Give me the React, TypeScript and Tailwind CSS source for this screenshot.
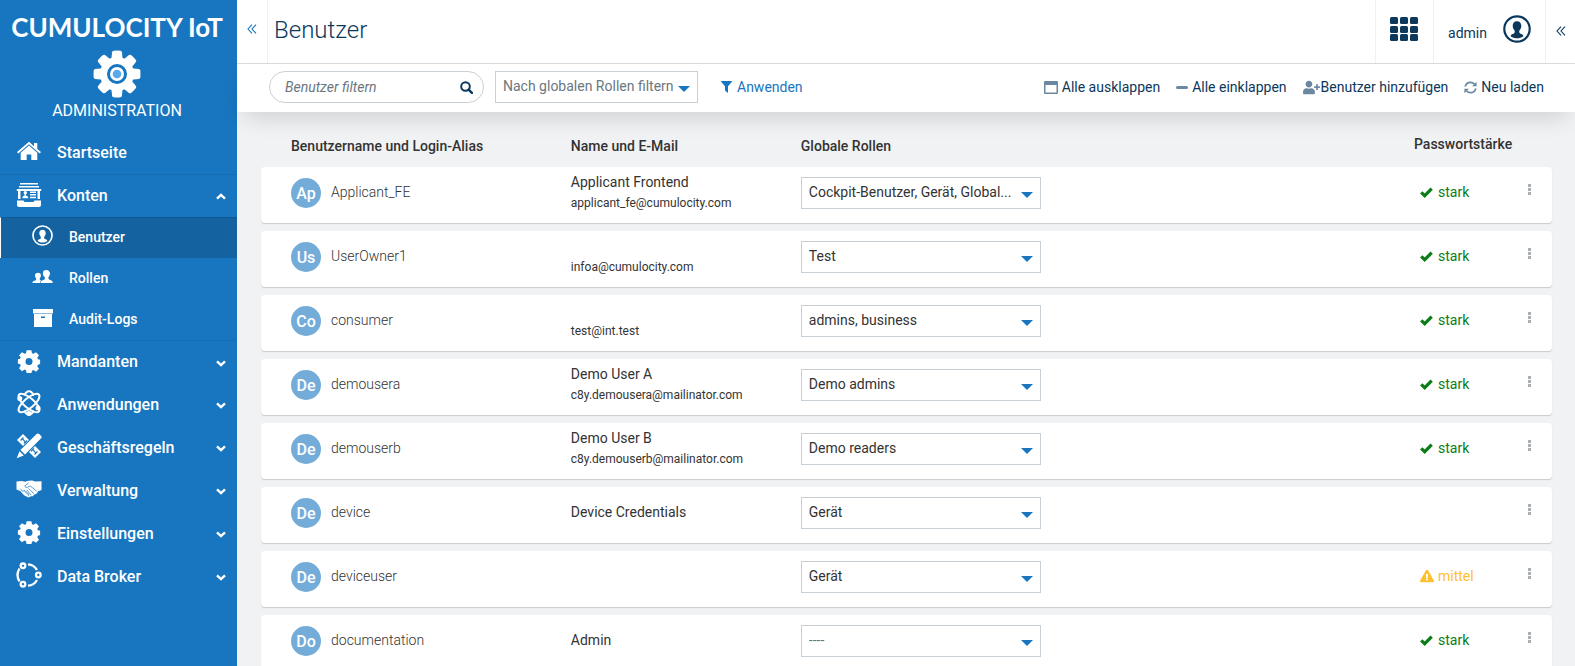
import React from 'react';
import { FaExclamationTriangle, FaUserPlus } from 'react-icons/fa';

type IconProps = { className?: string };

function GearIcon({ className }: IconProps) {
  return (
    <svg viewBox="0 0 24 24" fill="currentColor" className={className} aria-hidden="true">
      <path
        fillRule="evenodd"
        d="M9.600 1.300h4.800l.6 2.900 1.500.6 2.500-1.600 3 3.100-1.700 2.500.6 1.500 2.200.5v4.300l-2.200.6-.6 1.500 1.700 2.500-3 3-2.500-1.600-1.500.6-.6 2.500H9.600L9 21.200l-1.500-.6L5 22.200l-3-3 1.700-2.500-.6-1.500-2.200-.6v-4.300l2.200-.5.6-1.500L2 6.300l3-3.100 2.500 1.600L9 4.200zM12 8.900a3.500 3.500 0 1 0 0 7 3.500 3.500 0 0 0 0-7z"
      />
    </svg>
  );
}

function AppGearIcon({ className }: IconProps) {
  return (
    <svg viewBox="0 0 48 48" className={className} aria-hidden="true">
      <g fill="#fff">
        <circle cx="24" cy="24" r="17" />
        {[0, 45, 90, 135, 180, 225, 270, 315].map((a) => (
          <path key={a} d="M18.300 10l.8-7.800q.2-1.200 1.400-1.500q3.500-.4 7 0q1.200.3 1.400 1.500l.8 7.800z" transform={`rotate(${a} 24 24)`} />
        ))}
      </g>
      <circle cx="24" cy="24" r="10" fill="#1776bf" />
      <circle cx="24" cy="24" r="7" fill="#fff" />
      <circle cx="24" cy="24" r="4.300" fill="#5aa9ea" />
    </svg>
  );
}

function HomeIcon({ className }: IconProps) {
  return (
    <svg viewBox="0 0 24 20" fill="currentColor" className={className} aria-hidden="true">
      <path d="M12 .8L17 5.200V2h3.300v6L24 11l-1.300 1.500L12 3.300 1.300 12.500 0 11z" />
      <path d="M12 4.600l8.300 7.200V19h-6v-5.500H9.700V19h-6v-7.200z" />
    </svg>
  );
}

function HandshakeIcon({ className }: IconProps) {
  return (
    <svg viewBox="0 0 26 18" className={className} aria-hidden="true">
      <path
        fill="currentColor"
        d="M.5 1.500L6 1l3 .8L12.500.7 16 .5l3.500 1 6-.2V10l-3.300 1.200-1.700 2.600-2 .8-1.800 1.600-2 .1-1.700 1.200-2-.7-2.600-1.400-2-2L4.200 11 .5 9.500z"
      />
      <path
        fill="none"
        stroke="#1776bf"
        strokeWidth=".7"
        strokeLinejoin="round"
        d="M12.800 2.700L8.600 6.200q1 2 3.200.9l2.300-1.300 6.700 5.500M12.500 8.600l5.500 5M10.800 9.800l4.500 5.400M4.500 8.800l2.200 2.700 1.800-1.300.7 2 1.700-.3.200 2.200 1.700-.2-.2 2"
      />
    </svg>
  );
}

function CheckIcon({ className }: IconProps) {
  return (
    <svg viewBox="0 0 13 11" fill="none" stroke="currentColor" strokeWidth="3.200" className={className} aria-hidden="true">
      <path d="M1.200 5.300l3.500 3.400L11.700 1.700" />
    </svg>
  );
}

function SearchIcon({ className }: IconProps) {
  return (
    <svg viewBox="0 0 13 13" fill="none" stroke="currentColor" strokeWidth="2" className={className} aria-hidden="true">
      <circle cx="5.500" cy="5.500" r="4.300" />
      <path d="M8.600 8.600l3.300 3.300" strokeWidth="2.400" strokeLinecap="round" />
    </svg>
  );
}

function FilterIcon({ className }: IconProps) {
  return (
    <svg viewBox="0 0 11 12" fill="currentColor" className={className} aria-hidden="true">
      <path d="M.4 0h10.200q.6.500.1 1.100L7 5.200V12L4 9.500V5.200L.3 1.100Q-.2.500.4 0z" />
    </svg>
  );
}

function AccountsIcon({ className }: IconProps) {
  return (
    <svg viewBox="0 0 26 26" fill="currentColor" className={className} aria-hidden="true">
      <path d="M4 1h18v1.600H4zM3 4h20v1.600H3z" />
      <path
        fillRule="evenodd"
        d="M.8 7h24.400v2H24v8H2V9H.8zM4.500 9v8h17V9zM1 18.500h6.500l1 1.500h9l1-1.500H25V23q0 2-2 2H3q-2 0-2-2z"
      />
      <circle cx="9.300" cy="10.800" r="1.700" />
      <path d="M6.300 16.300q0-2.500 2.300-2.700v-2h1.400v2q2.300.2 2.300 2.700zM14 9.500h6v1.500h-6zM14 12.100h6v1.500h-6zM14 14.700h6v1.500h-6z" />
    </svg>
  );
}

function UserCircleIcon({ className }: IconProps) {
  return (
    <svg viewBox="0 0 28 28" className={className} aria-hidden="true">
      <circle cx="14" cy="14" r="12.700" fill="none" stroke="currentColor" strokeWidth="2.200" />
      <path
        fill="currentColor"
        d="M14 6.200c2.700 0 4.300 1.800 4.300 4.600 0 2-.8 3.500-1.900 4.700-.5 2 .1 3.100 1.700 3.500 1.400.3 2 1 2.300 2.300-2 1.400-4 2-6.400 2s-4.400-.6-6.400-2c.3-1.300.9-2 2.300-2.300 1.600-.4 2.200-1.500 1.700-3.500-1.100-1.200-1.900-2.700-1.900-4.700 0-2.800 1.600-4.600 4.300-4.600z"
      />
    </svg>
  );
}

function GroupIcon({ className }: IconProps) {
  return (
    <svg viewBox="0 0 22 14" fill="currentColor" className={className} aria-hidden="true">
      <path d="M15 0c2.500 0 4 1.500 3.800 3.900-.1 1.600-.8 2.700-1.500 3.600-.4 1.700.2 2.600 1.900 3.100 1.700.5 2.400 1.200 2.600 3.100H9c.1-1.900.9-2.600 2.700-3.100 1.600-.5 2.100-1.400 1.600-3.100-.9-.9-1.800-2-1.900-3.600C11.200 1.500 12.500 0 15 0z" />
      <path d="M6.300 3c2.100 0 3.200 1.200 3 3.100-.1 1.200-.6 2-1.200 2.700-.3 1.200.2 1.800 1.500 2.200-.8.700-1.200 1.500-1.200 2.700H.4c.1-1.500.7-2.100 2.200-2.500 1.500-.4 2-1.100 1.700-2.400-.6-.7-1.100-1.500-1.200-2.700C2.900 4.200 4.200 3 6.300 3z" />
    </svg>
  );
}

function ArchiveIcon({ className }: IconProps) {
  return (
    <svg viewBox="0 0 20 18" fill="currentColor" className={className} aria-hidden="true">
      <path fillRule="evenodd" d="M0 0h20v4.500H0zM1 5h18v13H1zM8 7.500v1.500h4V7.500z" />
    </svg>
  );
}

function AtomIcon({ className }: IconProps) {
  return (
    <svg viewBox="0 0 26 26" fill="none" stroke="currentColor" strokeWidth="2" className={className} aria-hidden="true">
      <ellipse cx="13" cy="13" rx="5" ry="13" transform="rotate(50 13 13)" />
      <ellipse cx="13" cy="13" rx="5" ry="13" transform="rotate(-50 13 13)" />
      <path d="M8.300 5.500C9.500 2.700 11 1.300 13 1.300s3.500 1.400 4.700 4.200M8.300 20.500c1.200 2.800 2.700 4.200 4.700 4.200s3.500-1.400 4.700-4.200" />
      <g fill="currentColor" stroke="none">
        <circle cx="3.800" cy="8.500" r="2.500" />
        <circle cx="22" cy="18" r="2.500" />
        <circle cx="13" cy="23.500" r="2.400" />
      </g>
    </svg>
  );
}

function RulesIcon({ className }: IconProps) {
  return (
    <svg viewBox="0 0 26 26" className={className} aria-hidden="true">
      <path d="M4 4l18 18" stroke="currentColor" strokeWidth="8.500" />
      <path d="M4.500 7.500l3-3M8 10.500l3-3M6.500 5.800L9 8.600M15 18.300l3-3M18.500 21.500l3-3M16.800 16.700l2.700 2.900" stroke="#1776bf" strokeWidth="1.200" />
      <path d="M5 21L22 4" stroke="#1776bf" strokeWidth="8.600" />
      <path fill="currentColor" d="M20.600 1.100Q22 0 23.200 1.100l1.900 1.900q1 1.100 0 2.300L9 21.600 4.400 17zM3.500 18.200l4.300 4.200L.7 25.300z" />
    </svg>
  );
}

function BrokerIcon({ className }: IconProps) {
  return (
    <svg viewBox="0 0 26 26" fill="none" stroke="currentColor" strokeWidth="2.300" className={className} aria-hidden="true">
      <circle cx="7" cy="3.800" r="2.300" />
      <circle cx="22.300" cy="13" r="2.300" />
      <circle cx="7" cy="22.200" r="2.300" />
      <path d="M3.500 6.500Q-.5 13 3.500 19.500M12 2.300q6 .2 9 5.700M12 23.700q6-.2 9-5.700" />
    </svg>
  );
}

function ChevronIcon({ className }: IconProps) {
  return (
    <svg viewBox="0 0 10 7" fill="none" stroke="currentColor" strokeWidth="2.400" className={className} aria-hidden="true">
      <path d="M1 1.300l4 3.800 4-3.800" />
    </svg>
  );
}

function DoubleLeftIcon({ className }: IconProps) {
  return (
    <svg viewBox="0 0 10 10" fill="none" stroke="currentColor" strokeWidth="1.100" className={className} aria-hidden="true">
      <path d="M5 .7L1 5l4 4.300M9 .7L5 5l4 4.300" />
    </svg>
  );
}

function WindowIcon({ className }: IconProps) {
  return (
    <svg viewBox="0 0 14 13" className={className} aria-hidden="true">
      <path fill="currentColor" fillRule="evenodd" d="M1 0h12q1 0 1 1v11q0 1-1 1H1q-1 0-1-1V1q0-1 1-1zM1.500 4v7.500h11V4z" />
    </svg>
  );
}

function RefreshIcon({ className }: IconProps) {
  return (
    <svg viewBox="0 0 13 13" className={className} aria-hidden="true">
      <path fill="none" stroke="currentColor" strokeWidth="1.700" d="M1.200 5.600C1.800 3 3.800 1.300 6.500 1.300c1.700 0 3 .7 4.100 1.900M11.800 7.400c-.6 2.600-2.600 4.300-5.300 4.300-1.700 0-3-.7-4.100-1.900" />
      <path fill="currentColor" d="M12.600.8v4.500H8.100zM.4 12.200V7.700h4.500z" />
    </svg>
  );
}

function GridIcon({ className }: IconProps) {
  return (
    <svg viewBox="0 0 28 24" fill="currentColor" className={className} aria-hidden="true">
      {[0, 10, 20].map((x) => [0, 9, 17].map((y) => <rect key={`${x}-${y}`} x={x} y={y} width="8" height="7" rx="1.500" />))}
    </svg>
  );
}

function DotsIcon({ className }: IconProps) {
  return (
    <svg viewBox="0 0 3 11" fill="currentColor" className={className} aria-hidden="true">
      <path d="M0 0h3v3H0zM0 4h3v3H0zM0 8h3v3H0z" />
    </svg>
  );
}

function RootItem({ icon, label, expanded, divided }: { icon: React.ReactNode; label: string; expanded?: boolean; divided?: boolean }) {
  return (
    <a
      href="#"
      className={
        divided
          ? 'flex h-[43px] items-center border-t border-[#166db1] pl-4 pr-[11px] text-base font-medium'
          : 'flex h-[43px] items-center pl-4 pr-[11px] text-base font-medium'
      }
    >
      <span className="mr-[15px] flex w-[26px] justify-center pb-[3px]">{icon}</span>
      <span className="flex-1">{label}</span>
      {expanded !== undefined && <ChevronIcon className={expanded ? 'w-[10px] rotate-180' : 'mt-[2px] w-[10px]'} />}
    </a>
  );
}

function SubItem({ icon, label, active }: { icon: React.ReactNode; label: string; active?: boolean }) {
  return (
    <a
      href="#"
      className={
        active
          ? 'flex h-[41px] items-center border-l border-l-white border-t border-t-[#135a93] bg-[#1562a0] pb-[2px] pl-[31px] text-sm font-medium'
          : 'flex h-[41px] items-center pb-px pl-8 text-sm font-medium'
      }
    >
      <span className="mr-4 flex w-[21px] justify-center pb-[3px]">{icon}</span>
      {label}
    </a>
  );
}

function Sidebar() {
  return (
    <nav className="w-[237px] shrink-0 bg-[#1776bf] text-white">
      <div className="flex flex-col items-center pr-[3px] pt-[9px]">
        <div className="whitespace-nowrap font-[Lato] text-[26px] font-bold leading-9">CUMULOCITY IoT</div>
        <AppGearIcon className="mt-[5px] size-12" />
        <div className="mt-[3px] text-base leading-5">ADMINISTRATION</div>
      </div>
      <div className="mt-[10px]">
        <RootItem icon={<HomeIcon className="w-6" />} label="Startseite" />
        <RootItem icon={<AccountsIcon className="size-[26px]" />} label="Konten" expanded divided />
        <SubItem icon={<UserCircleIcon className="size-[21px]" />} label="Benutzer" active />
        <SubItem icon={<GroupIcon className="w-[21px]" />} label="Rollen" />
        <SubItem icon={<ArchiveIcon className="w-5" />} label="Audit-Logs" />
        <RootItem icon={<GearIcon className="size-6" />} label="Mandanten" expanded={false} divided />
        <RootItem icon={<AtomIcon className="size-[26px]" />} label="Anwendungen" expanded={false} />
        <RootItem icon={<RulesIcon className="size-[26px]" />} label="Geschäftsregeln" expanded={false} />
        <RootItem icon={<HandshakeIcon className="w-[26px]" />} label="Verwaltung" expanded={false} />
        <RootItem icon={<GearIcon className="size-6" />} label="Einstellungen" expanded={false} />
        <RootItem icon={<BrokerIcon className="size-[26px]" />} label="Data Broker" expanded={false} />
      </div>
    </nav>
  );
}

function Header() {
  return (
    <header className="flex h-16 shrink-0 border-b border-[#d9dcdf] bg-white text-[#0b385b]">
      <button aria-label="Navigation einklappen" className="flex w-[31px] items-center justify-center border-r border-[#eff0f2] pb-[5px] text-[#1776bf]">
        <DoubleLeftIcon className="size-[10px]" />
      </button>
      <h1 className="flex-1 pl-[6px] pt-3 text-2xl font-light leading-9">Benutzer</h1>
      <button aria-label="Anwendungen" className="flex w-[58px] items-center justify-center border-l border-[#eff0f2] pb-[6px] pr-[2px]">
        <GridIcon className="w-7" />
      </button>
      <button className="flex items-center gap-4 border-x border-[#eff0f2] px-[14px] text-sm">
        <span className="pt-[2px]">admin</span>
        <UserCircleIcon className="mb-[6px] size-7" />
      </button>
      <button aria-label="Seitenleiste ausklappen" className="flex w-[29px] items-center justify-center pb-[2px]">
        <DoubleLeftIcon className="size-[10px]" />
      </button>
    </header>
  );
}

function SelectArrow({ className }: IconProps) {
  return (
    <span className={className}>
      <svg viewBox="0 0 12 6" className="w-3 text-[#1776bf]" aria-hidden="true">
        <path fill="currentColor" d="M0 0h12L6 6z" />
      </svg>
    </span>
  );
}

function Toolbar() {
  return (
    <div className="relative z-10 flex h-12 shrink-0 items-center bg-white pb-[2px] pl-8 pr-[31px] text-sm text-[#0b385b] shadow-[0_12px_24px_-8px_rgba(0,0,0,0.16)]">
      <label className="flex h-8 w-[215px] items-center rounded-full border border-[#c9d0d5] pl-[15px] pr-[10px]">
        <input
          type="text"
          aria-label="Benutzer filtern"
          placeholder="Benutzer filtern"
          className="min-w-0 flex-1 bg-transparent italic outline-none placeholder:text-[#6b7780]"
        />
        <SearchIcon className="size-[13px]" />
      </label>
      <div className="relative ml-[11px]">
        <select
          aria-label="Nach globalen Rollen filtern"
          className="h-8 w-[203px] appearance-none border border-[#c9d0d5] bg-white pb-[2px] pl-[7px] text-[#6b7780]"
        >
          <option>Nach globalen Rollen filtern</option>
        </select>
        <SelectArrow className="pointer-events-none absolute right-2 top-[15px]" />
      </div>
      <button className="ml-[23px] flex items-center gap-[5px] pb-px text-[#1776bf]">
        <FilterIcon className="w-[11px]" />
        Anwenden
      </button>
      <div className="ml-auto flex items-center gap-4">
        <button className="flex items-center gap-1">
          <WindowIcon className="w-[14px] text-[#6c88a0]" />
          Alle ausklappen
        </button>
        <button className="flex items-center gap-1">
          <span className="h-[3px] w-3 rounded-xs bg-[#6c88a0]" />
          Alle einklappen
        </button>
        <button className="flex items-center gap-px">
          <FaUserPlus className="size-[17px] text-[#6c88a0]" />
          Benutzer hinzufügen
        </button>
        <button className="flex items-center gap-1">
          <RefreshIcon className="size-[13px] text-[#6c88a0]" />
          Neu laden
        </button>
      </div>
    </div>
  );
}

type User = { login: string; name: string; email: string; roles: string; strength?: 'stark' | 'mittel' };

const NO_ROLES = '----';

const USERS: User[] = [
  { login: 'Applicant_FE', name: 'Applicant Frontend', email: 'applicant_fe@cumulocity.com', roles: 'Cockpit-Benutzer, Gerät, Global...', strength: 'stark' },
  { login: 'UserOwner1', name: '', email: 'infoa@cumulocity.com', roles: 'Test', strength: 'stark' },
  { login: 'consumer', name: '', email: 'test@int.test', roles: 'admins, business', strength: 'stark' },
  { login: 'demousera', name: 'Demo User A', email: 'c8y.demousera@mailinator.com', roles: 'Demo admins', strength: 'stark' },
  { login: 'demouserb', name: 'Demo User B', email: 'c8y.demouserb@mailinator.com', roles: 'Demo readers', strength: 'stark' },
  { login: 'device', name: 'Device Credentials', email: '', roles: 'Gerät' },
  { login: 'deviceuser', name: '', email: '', roles: 'Gerät', strength: 'mittel' },
  { login: 'documentation', name: 'Admin', email: '', roles: NO_ROLES, strength: 'stark' },
];

function Strength({ value }: { value: 'stark' | 'mittel' }) {
  return value === 'stark' ? (
    <span className="flex items-center gap-[5px] text-[#0a7d14]">
      <CheckIcon className="w-[13px]" />
      stark
    </span>
  ) : (
    <span className="flex items-center gap-1 text-[#ffc02e]">
      <FaExclamationTriangle className="size-[14px]" />
      mittel
    </span>
  );
}

function UserRow({ user }: { user: User }) {
  const stacked = user.email !== '';
  return (
    <tr className="h-14 rounded-sm bg-white shadow-[0_1px_1px_rgba(0,0,0,0.16)]">
      <td className="rounded-l-sm py-0 pl-[30px]">
        <div className="flex items-center gap-[10px] pb-1">
          <span className="flex size-[30px] items-center justify-center rounded-full bg-[#74acd9] pt-[2px] text-base font-medium text-white">
            {user.login.charAt(0).toUpperCase() + user.login.charAt(1)}
          </span>
          <span className="pb-[2px] font-light">{user.login}</span>
        </div>
      </td>
      <td className="p-0">
        <div className="pb-[6px]">
          <div className="h-5 leading-5">{user.name}</div>
          {stacked && <div className="h-5 text-xs leading-[22px]">{user.email}</div>}
        </div>
      </td>
      <td className="p-0">
        <div className="relative mb-1 w-60">
          <select
            aria-label={`Globale Rollen ${user.login}`}
            className={
              user.roles === NO_ROLES
                ? 'h-8 w-full appearance-none border border-[#c9d0d5] bg-white pb-[2px] pl-[7px] pr-7 text-[#6b7780]'
                : 'h-8 w-full appearance-none border border-[#c9d0d5] bg-white pb-[2px] pl-[7px] pr-7'
            }
          >
            <option>{user.roles}</option>
          </select>
          <SelectArrow className="pointer-events-none absolute right-2 top-[15px]" />
        </div>
      </td>
      <td className="pb-[6px] pl-[6px]">{user.strength && <Strength value={user.strength} />}</td>
      <td className="rounded-r-sm pb-3">
        <button aria-label={`Aktionen ${user.login}`} className="flex p-1 text-[#a9b0b5]">
          <DotsIcon className="w-[3px]" />
        </button>
      </td>
    </tr>
  );
}

export default function App() {
  return (
    <div className="flex h-screen overflow-hidden font-[Roboto,sans-serif] text-sm text-[#333]">
      <Sidebar />
      <div className="flex min-w-0 flex-1 flex-col bg-[#f1f2f4]">
        <Header />
        <Toolbar />
        <main className="min-h-0 flex-1 overflow-y-auto pl-6 pr-[23px] pt-4 [scrollbar-width:none]">
          <table className="w-full table-fixed border-separate border-spacing-x-0 border-spacing-y-2 text-left">
            <colgroup>
              <col className="w-[24%]" />
              <col className="w-[230px]" />
              <col />
              <col className="w-[110px]" />
              <col className="w-7" />
            </colgroup>
            <thead>
              <tr className="h-[23px] align-top leading-5">
                <th className="p-0 pl-[30px] font-medium">Benutzername und Login-Alias</th>
                <th className="p-0 font-medium">Name und E-Mail</th>
                <th className="p-0 font-medium">Globale Rollen</th>
                <th className="p-0 font-medium leading-4">Passwortstärke</th>
                <th className="p-0" aria-label="Aktionen" />
              </tr>
            </thead>
            <tbody>
              {USERS.map((user) => (
                <UserRow key={user.login} user={user} />
              ))}
            </tbody>
          </table>
        </main>
      </div>
    </div>
  );
}
